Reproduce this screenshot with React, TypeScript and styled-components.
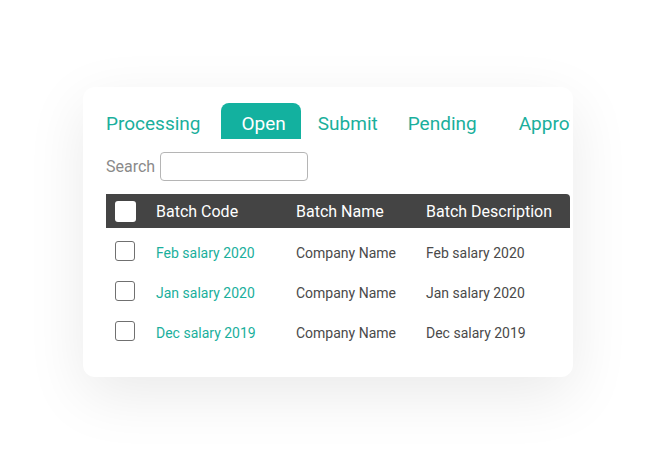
import styled, { createGlobalStyle } from 'styled-components'

const tabs = [
    { label: 'Processing', gap: 0 },
    { label: 'Open', gap: 20, active: true },
    { label: 'Submit', gap: 17 },
    { label: 'Pending', gap: 30 },
    { label: 'Approved', gap: 42 },
]

const rows = [
    { code: 'Feb salary 2020', name: 'Company Name', desc: 'Feb salary 2020' },
    { code: 'Jan salary 2020', name: 'Company Name', desc: 'Jan salary 2020' },
    { code: 'Dec salary 2019', name: 'Company Name', desc: 'Dec salary 2019' },
]

const App = () => {
    return (
        <>
            <GlobalStyle />
            <Page>
                <Card>
                    <TabBar>
                        {tabs.map(t => (
                            <Tab key={t.label} $gap={t.gap} $active={!!t.active}>{t.label}</Tab>
                        ))}
                    </TabBar>
                    <SearchRow>
                        <SearchLabel>Search</SearchLabel>
                        <SearchInput type='text' />
                    </SearchRow>
                    <Table>
                        <HeaderRow>
                            <Cell><Check $header /></Cell>
                            <HeadCell>Batch Code</HeadCell>
                            <HeadCell>Batch Name</HeadCell>
                            <HeadCell>Batch Description</HeadCell>
                        </HeaderRow>
                        <Body>
                            {rows.map(r => (
                                <Row key={r.code}>
                                    <Cell><Check /></Cell>
                                    <CodeCell>{r.code}</CodeCell>
                                    <TextCell>{r.name}</TextCell>
                                    <TextCell>{r.desc}</TextCell>
                                </Row>
                            ))}
                        </Body>
                    </Table>
                </Card>
            </Page>
        </>
    )
}

export default App

const GlobalStyle = createGlobalStyle`
    body {
        margin: 0;
        background: #ffffff;
        font-family: Roboto, 'Liberation Sans', sans-serif;
    }
`

const Page = styled.div`
    width: 670px;
    height: 470px;
    padding: 87px 0 0 83px;
    box-sizing: border-box;
`

const Card = styled.div`
    width: 490px;
    height: 290px;
    box-sizing: border-box;
    padding: 16px 3px 0 23px;
    background: #ffffff;
    border-radius: 12px;
    box-shadow: 0 18px 60px rgba(0, 0, 0, 0.085);
`

// the last tab runs past the card edge and is clipped, as in the design
const TabBar = styled.div`
    display: flex;
    width: 464px;
    height: 36px;
    overflow: hidden;
    white-space: nowrap;
`

const Tab = styled.div<{ $gap: number, $active: boolean }>`
    flex: none;
    box-sizing: border-box;
    height: 36px;
    margin-left: ${p => p.$gap}px;
    padding: 5px ${p => p.$active ? '15px' : '0'} 0 ${p => p.$active ? '21px' : '0'};
    line-height: 31px;
    font-size: 19px;
    color: ${p => p.$active ? '#ffffff' : '#1aaf9c'};
    background: ${p => p.$active ? '#13b19f' : 'transparent'};
    border-radius: 8px 8px 0 0;
`

const SearchRow = styled.div`
    display: flex;
    align-items: center;
    gap: 5px;
    margin-top: 13px;
`

const SearchLabel = styled.span`
    font-size: 16px;
    color: #8a8a8a;
`

const SearchInput = styled.input`
    width: 148px;
    height: 29px;
    box-sizing: border-box;
    border: 1px solid #b5b5b5;
    border-radius: 4px;
    outline: none;
`

const Table = styled.div`
    margin-top: 13px;
    width: 464px;
`

const HeaderRow = styled.div`
    display: grid;
    grid-template-columns: 50px 140px 130px 1fr;
    align-items: center;
    height: 34px;
    background: #444444;
    border-radius: 0 4px 0 0;
`

const Body = styled.div`
    padding-top: 3px;
`

const Row = styled.div`
    display: grid;
    grid-template-columns: 50px 140px 130px 1fr;
    align-items: center;
    height: 40px;
`

const Cell = styled.div`
    display: flex;
    align-items: center;
    padding-left: 9px;
`

const HeadCell = styled.div`
    font-size: 16px;
    color: #ffffff;
`

const CodeCell = styled.div`
    padding-top: 3px;
    font-size: 14px;
    color: #1aaf9c;
`

const TextCell = styled.div`
    padding-top: 3px;
    font-size: 14px;
    color: #4a4a4a;
`

const Check = styled.div<{ $header?: boolean }>`
    box-sizing: border-box;
    width: ${p => p.$header ? 21 : 20}px;
    height: ${p => p.$header ? 21 : 20}px;
    border-radius: 3px;
    background: #ffffff;
    border: ${p => p.$header ? 'none' : '1.5px solid #707070'};
`
